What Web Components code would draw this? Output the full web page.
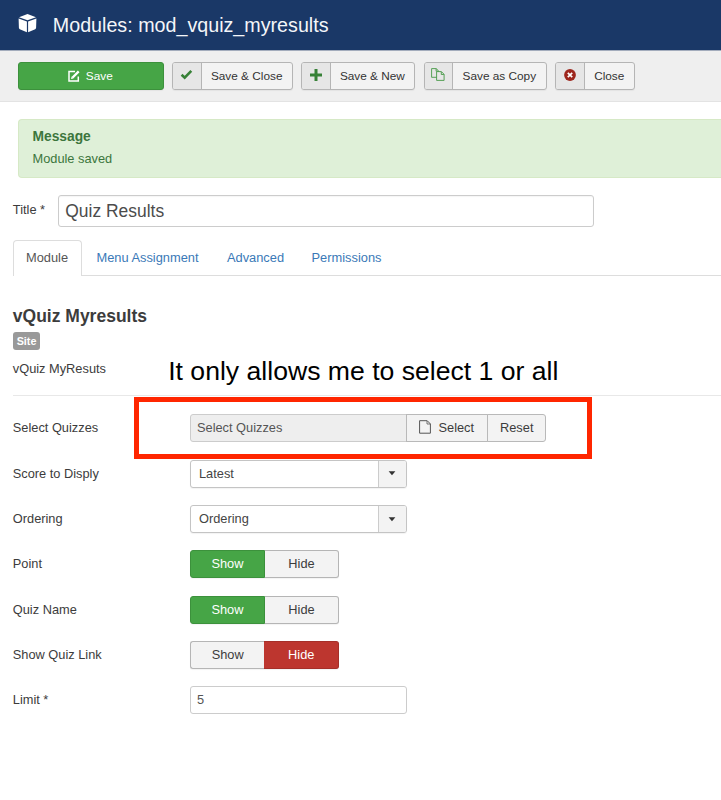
<!DOCTYPE html>
<html lang="en">
<head>
<meta charset="utf-8">
<title>Modules: mod_vquiz_myresults</title>
<style>
html,body{margin:0;height:100%;overflow:hidden;background:#fff}
body{font-family:"Liberation Sans",Arial,sans-serif;font-size:12.8px;line-height:18px;color:#3c3c3c}
</style>
</head>
<body>
<module-page></module-page>
<script>
const define = (name, html) => {
  const t = document.createElement('template');
  t.innerHTML = '<style>*{box-sizing:border-box}</style>' + html;
  customElements.define(name, class extends HTMLElement {
    constructor() {
      super();
      this.attachShadow({ mode: 'open' }).append(t.content.cloneNode(true));
    }
  });
};

define('page-header', `
<style>
:host{display:flex;align-items:center;height:51px;box-sizing:border-box;padding:0 0 1px 18px;background:#1a3867;color:#f4f6f9;border-bottom:1px solid #a3acbc;font-size:19.7px;line-height:24px}
svg{width:19px;height:20px;margin-right:15.8px;margin-top:-3px}
h1{font:inherit;margin:0;white-space:nowrap}
</style>
<svg viewBox="0 0 19 20" fill="#fff"><path d="M9.5.9 18 4.2 9.5 7.3 1 4.2zM.6 5.4 8.9 8.6V19.2L1.8 16.2Q.9 15.7.9 14.8zM18.4 5.4 10.1 8.6V19.2L17.2 16.2Q18.1 15.7 18.1 14.8z"/></svg>
<h1><slot></slot></h1>`);

define('tool-bar', `
<style>
:host{display:flex;gap:8.7px;height:50.5px;box-sizing:border-box;padding:11px 0 0 17.5px;background:#efefef;border-bottom:1px solid #e3e3e3}
</style><slot></slot>`);

define('tool-button', `
<style>
:host{display:flex;box-sizing:border-box;height:27.5px;border:1px solid #b5b5b5;border-radius:3px;background:#f3f3f3;color:#333;font-size:11.82px;box-shadow:0 1px 1px rgba(0,0,0,.05);overflow:hidden}
.icon{display:flex;align-items:center;justify-content:center;width:28.5px;background:#e6e6e6;border-right:1px solid #b5b5b5}
.text{flex:1;display:flex;align-items:center;justify-content:center;white-space:nowrap}
:host([primary]){background:#46a546;border-color:#3c913c;color:#fff;justify-content:center}
:host([primary]) .icon{background:none;border:0;width:12px;margin-right:5.5px}
:host([primary]) .text{flex:none}
</style>
<span class="icon"><slot name="icon"></slot></span><span class="text"><slot></slot></span>`);

define('alert-message', `
<style>
:host{display:block;box-sizing:border-box;height:58.5px;margin:17.5px 0 0 17.5px;padding:7px 14px;background:#dff0d8;border:1px solid #d6e9c6;border-right:0;border-radius:4px 0 0 4px;color:#3c763d}
h4{margin:0 0 3px;font-size:13.8px;line-height:20px}
p{margin:0;line-height:18px}
</style><h4><slot name="title"></slot></h4><p><slot></slot></p>`);

define('title-field', `
<style>
:host{display:flex;margin:17.5px 0 0 12.8px;height:32px}
label{width:45px;padding-top:6px}
div{width:536.4px;display:flex;align-items:center;border:1px solid #ccc;border-radius:3px;padding-left:6.5px;font-size:17.45px;color:#4c4c4c;box-shadow:inset 0 1px 1px rgba(0,0,0,.04)}
</style><label><slot name="label"></slot></label><div><slot></slot></div>`);

define('tab-list', `
<style>
:host{display:flex;height:36px;box-sizing:border-box;margin:12.5px 0 0 12.5px;border-bottom:1px solid #ddd}
</style><slot></slot>`);

define('tab-item', `
<style>
:host{display:flex;align-items:center;justify-content:center;box-sizing:border-box;height:36px;border:1px solid transparent;border-bottom:0;color:#3a79b7;font-size:12.85px;white-space:nowrap}
:host([active]){background:#fff;border-color:#ddd;border-radius:4px 4px 0 0;color:#555}
</style><slot></slot>`);

define('module-info', `
<style>
:host{display:block;margin:28.5px 0 0 12.8px;height:91.5px;box-sizing:border-box;border-bottom:1px solid #e8e8e8}
h3{margin:0;font-size:17.5px;line-height:24px}
.badge{display:block;width:27.5px;height:18px;margin-top:4px;border-radius:3px;background:#999;color:#fff;font-weight:bold;font-size:10.8px;line-height:18px;text-align:center}
p{margin:9.5px 0 0}
</style><h3><slot name="name"></slot></h3><span class="badge"><slot name="client"></slot></span><p><slot></slot></p>`);

define('form-rows', `
<style>:host{display:grid;grid-auto-rows:45.3px;margin:10.3px 0 0 12.8px}</style><slot></slot>`);

define('form-row', `
<style>
:host{display:grid;grid-template-columns:177.2px auto;align-items:center;justify-content:start}
label{white-space:nowrap}
</style><label><slot name="label"></slot></label><slot></slot>`);

define('text-box', `
<style>
:host{display:flex;align-items:center;box-sizing:border-box;width:217px;height:27.5px;padding-left:6px;border:1px solid #ccc;border-radius:3px;color:#555;background:#fff}
</style><slot></slot>`);

define('select-box', `
<style>
:host{display:flex;box-sizing:border-box;width:217px;height:28px;border:1px solid #c4c4c4;border-radius:3px;color:#444;background:#fff;box-shadow:0 1px 1px rgba(0,0,0,.05)}
.value{flex:1;padding-left:8px;line-height:26px}
.arrow{width:28px;display:flex;align-items:center;justify-content:center;border-left:1px solid #ccc;background:#f3f3f3;border-radius:0 2px 2px 0}
</style><span class="value"><slot></slot></span><span class="arrow"><svg width="8" height="5"><path d="M.6.2h6.8L4 4.3z" fill="#333"/></svg></span>`);

define('toggle-group', `
<style>
:host{display:flex;width:149px;height:28px;font-size:12.8px}
span{flex:1;display:flex;align-items:center;justify-content:center;border:1px solid #b5b5b5;background:#f3f3f3;color:#3c3c3c;box-shadow:0 1px 1px rgba(0,0,0,.05)}
.a{border-radius:3px 0 0 3px}.b{border-radius:0 3px 3px 0;border-left:0}
:host([on]) .a{background:#46a546;border-color:#3c913c;color:#fff}
:host([off]) .b{background:#bd362f;border-color:#a52f29;color:#fff}
:host([off]) .a{border-right:0}
</style><span class="a">Show</span><span class="b">Hide</span>`);

define('quiz-picker', `
<style>
:host{display:flex;height:28px;white-space:nowrap}
span{display:flex;align-items:center;border:1px solid #b9b9b9}
.v{width:217px;background:#eee;border-color:#ccc;border-radius:3px 0 0 3px;padding-left:6px;color:#555}
.s{width:82px;background:#f3f3f3;margin-left:-1px;padding-left:12.5px;gap:7px}
.r{width:59.5px;background:#f3f3f3;margin-left:-1px;border-radius:0 3px 3px 0;justify-content:center}
</style>
<span class="v">Select Quizzes</span>
<span class="s"><svg width="12" height="14" viewBox="0 0 12 14" fill="none" stroke="#555" style="margin-top:-2px"><path d="M.6.7H8.2L11.4 3.9V13.2H.6z"/><path d="M8 1V4H11.2" stroke-width=".8"/></svg>Select</span>
<span class="r">Reset</span>`);

define('callout-note', `
<style>
:host{position:absolute;left:134px;top:355px;width:458px;height:105px;pointer-events:none}
p{margin:0 0 0 34.2px;height:42.2px;font-size:26.6px;line-height:33px;color:#000;white-space:nowrap}
div{height:62px;border:5.5px solid #ff2600}
</style><p><slot></slot></p><div></div>`);

define('module-page', `
<style>:host{display:block;position:relative;height:800px;overflow:hidden;background:#fff}</style>
<page-header>Modules: mod_vquiz_myresults</page-header>
<tool-bar>
<tool-button primary style="width:146px"><svg slot="icon" width="12" height="12" viewBox="0 0 12 12" fill="none" stroke="#fff"><path d="M7 1.5H1V11H10.3V6.5" stroke-width="1.5"/><path d="M4.4 7.8 10.7 1.4" stroke-width="2.3"/><path d="M3 9 3.7 6.6 5.4 8.4z" fill="#fff" stroke="none"/></svg>Save</tool-button>
<tool-button style="width:120.5px"><svg slot="icon" width="13" height="11" viewBox="0 0 13 11" style="margin-top:-2px"><path d="M1.6 5.7 4.7 8.6 11.3 1.9" fill="none" stroke="#378137" stroke-width="2.6"/></svg>Save &amp; Close</tool-button>
<tool-button style="width:113.5px"><svg slot="icon" width="12" height="12" viewBox="0 0 12 12" style="margin-top:-2px"><path d="M6 0V12M0 6H12" stroke="#378137" stroke-width="3"/></svg>Save &amp; New</tool-button>
<tool-button style="width:123px"><svg slot="icon" width="14" height="13" viewBox="0 0 14 13" fill="#e6e6e6" stroke="#469846" stroke-width=".9" style="margin-top:-2px"><path d="M.6.6H5.2L7.7 3V9.3H.6zM5.1.8V3.2H7.5"/><path d="M5.6 3.6H10.4L13.1 6.3V12.4H5.6zM10.3 3.8V6.5H12.9"/></svg>Save as Copy</tool-button>
<tool-button style="width:79.5px"><svg slot="icon" width="12" height="12" viewBox="0 0 12 12" style="margin-top:-2px"><circle cx="6" cy="6" r="5.9" fill="#9d261d"/><path d="M3.8 3.8 8.2 8.2M8.2 3.8 3.8 8.2" stroke="#fff" stroke-width="1.7"/></svg>Close</tool-button>
</tool-bar>
<alert-message><span slot="title">Message</span>Module saved</alert-message>
<title-field><span slot="label">Title *</span>Quiz Results</title-field>
<tab-list><tab-item active style="width:69px">Module</tab-item><tab-item style="width:132px">Menu Assignment</tab-item><tab-item style="width:84px">Advanced</tab-item><tab-item style="width:98px">Permissions</tab-item></tab-list>
<module-info><span slot="name">vQuiz Myresults</span><span slot="client">Site</span>vQuiz MyResuts</module-info>
<form-rows>
<form-row><span slot="label">Select Quizzes</span><quiz-picker></quiz-picker></form-row>
<form-row><span slot="label">Score to Disply</span><select-box>Latest</select-box></form-row>
<form-row><span slot="label">Ordering</span><select-box>Ordering</select-box></form-row>
<form-row><span slot="label">Point</span><toggle-group on></toggle-group></form-row>
<form-row><span slot="label">Quiz Name</span><toggle-group on></toggle-group></form-row>
<form-row><span slot="label">Show Quiz Link</span><toggle-group off></toggle-group></form-row>
<form-row><span slot="label">Limit *</span><text-box>5</text-box></form-row>
</form-rows>
<callout-note>It only allows me to select 1 or all</callout-note>`);
</script>
</body>
</html>
